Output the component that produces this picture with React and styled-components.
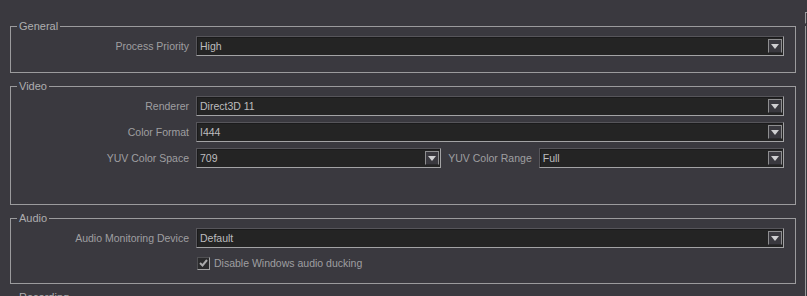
import styled, { createGlobalStyle } from 'styled-components';

const Global = createGlobalStyle`
  html, body {
    margin: 0;
    padding: 0;
    background: #3a393f;
    overflow: hidden;
  }
  body {
    font-family: "Liberation Sans", Arial, sans-serif;
    font-size: 10.5px;
  }
`;

const Page = styled.div`
  display: flex;
  width: 807px;
  height: 296px;
  overflow: hidden;
`;

const Main = styled.div`
  display: flex;
  flex-direction: column;
  gap: 7px;
  width: 786px;
  margin-left: 10px;
  padding-top: 20px;
`;

const ScrollEdge = styled.div`
  display: flex;
  flex-direction: column;
  width: 2px;
  margin-left: 9px;
`;

const Thumb = styled.div`
  height: 10px;
  margin-top: 12px;
  border-left: 1px solid #9b9b9d;
  border-top: 1px solid #9b9b9d;
  border-bottom: 1px solid #2a2a2e;
`;

const Track = styled.div`
  flex: 1;
  margin-top: 2px;
  border-left: 1px solid #9b9b9d;
`;

const Group = styled.fieldset`
  margin: 0;
  min-width: 0;
  border: 1px solid #9b9b9d;
  padding: 4px 11px ${(p) => p.$bottom}px 0;
  display: grid;
  grid-template-columns: 178px 1fr;
  column-gap: 7px;
  row-gap: ${(p) => p.$gap || 6}px;
  align-items: center;
`;

const Legend = styled.legend`
  margin-left: 6px;
  padding: 0 2px;
  line-height: 12px;
  font-size: 11px;
  color: #aeaeb0;
`;

const Label = styled.div`
  text-align: right;
  color: #9f9fa1;
  white-space: nowrap;
  line-height: 20px;
`;

const Split = styled.div`
  display: grid;
  grid-template-columns: 1fr auto 1fr;
  column-gap: 7px;
  align-items: center;
`;

const Combo = styled.div`
  box-sizing: border-box;
  height: 20px;
  display: flex;
  align-items: center;
  background: #242424;
  border: 1px solid;
  border-color: #56555a #a3a3a5 #a3a3a5 #56555a;
  box-shadow: inset 1px 1px 0 #1b1b1c;
  padding: 0 1px 0 3px;
  color: #bdbdbf;
`;

const Value = styled.span`
  flex: 1;
  white-space: nowrap;
`;

const Arrow = styled.div`
  box-sizing: border-box;
  width: 14px;
  height: 14px;
  display: flex;
  align-items: center;
  justify-content: center;
  background: #3a393f;
  border: 1px solid;
  border-color: #8e8e90 #8e8e90 #2a2a2d #8e8e90;
`;

const CheckRow = styled.label`
  grid-column: 2;
  display: flex;
  align-items: center;
  gap: 4px;
  height: 14px;
  padding-left: 1px;
  color: #9f9fa1;
`;

const Box = styled.span`
  box-sizing: border-box;
  width: 13px;
  height: 13px;
  display: flex;
  align-items: center;
  justify-content: center;
  background: #2a2a2c;
  border: 1px solid;
  border-color: #505053 #a3a3a5 #a3a3a5 #505053;
`;

function Select({ value }) {
  return (
    <Combo>
      <Value>{value}</Value>
      <Arrow>
        <svg width="8" height="5" viewBox="0 0 8 5">
          <polygon points="0,0 8,0 4,5" fill="#cfcfd1" />
        </svg>
      </Arrow>
    </Combo>
  );
}

export default function App() {
  return (
    <>
      <Global />
      <Page>
        <Main>
          <Group $bottom={16}>
            <Legend>General</Legend>
            <Label>Process Priority</Label>
            <Select value="High" />
          </Group>

          <Group $bottom={36}>
            <Legend>Video</Legend>
            <Label>Renderer</Label>
            <Select value="Direct3D 11" />
            <Label>Color Format</Label>
            <Select value="I444" />
            <Label>YUV Color Space</Label>
            <Split>
              <Select value="709" />
              <Label>YUV Color Range</Label>
              <Select value="Full" />
            </Split>
          </Group>

          <Group $bottom={13} $gap={8}>
            <Legend>Audio</Legend>
            <Label>Audio Monitoring Device</Label>
            <Select value="Default" />
            <CheckRow>
              <Box>
                <svg width="9" height="8" viewBox="0 0 9 8">
                  <polyline points="1,4 3.5,6.5 8,1" fill="none" stroke="#a9a9ab" strokeWidth="2" />
                </svg>
              </Box>
              Disable Windows audio ducking
            </CheckRow>
          </Group>

          <Group $bottom={40}>
            <Legend>Recording</Legend>
          </Group>
        </Main>
        <ScrollEdge>
          <Thumb />
          <Track />
        </ScrollEdge>
      </Page>
    </>
  );
}
